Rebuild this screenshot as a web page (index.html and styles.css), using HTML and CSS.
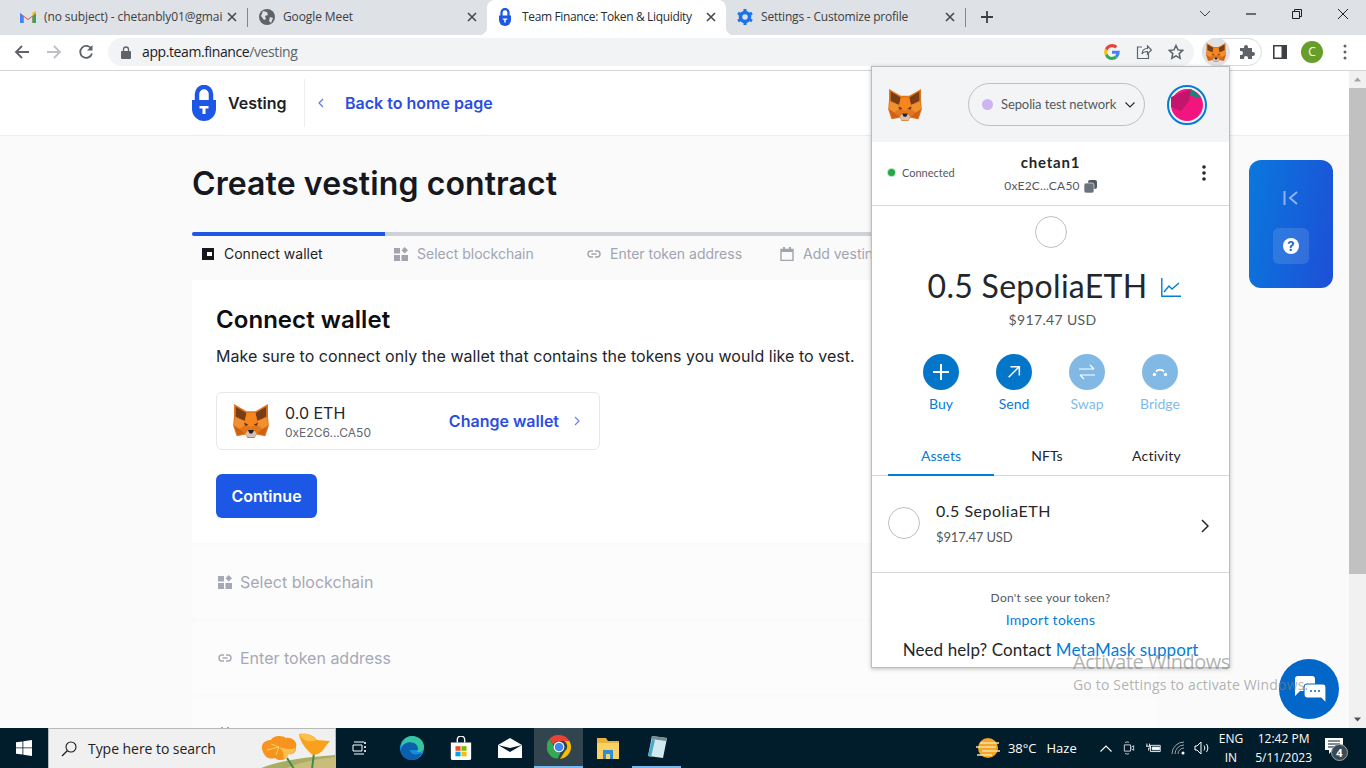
FILE: index.html
```html
<!DOCTYPE html>
<html lang="en">
<head>
<meta charset="utf-8">
<title>Team Finance: Token &amp; Liquidity</title>
<link rel="stylesheet" href="styles.css">
</head>
<body>
<svg class="defs" width="0" height="0" aria-hidden="true">
  <defs>
    <symbol id="fox" viewBox="0 0 40 38">
      <polygon fill="#E2761B" points="1,0 15,8 25,8 39,0 39,14 40,24 36,36 26,34 24,38 16,38 14,34 4,36 0,24 1,14"/>
      <polygon fill="#763D16" points="3,3 15,10 13,19 3,14"/>
      <polygon fill="#763D16" points="37,3 25,10 27,19 37,14"/>
      <polygon fill="#F6851B" points="15,10 25,10 27,19 24,24 20,26 16,24 13,19"/>
      <polygon fill="#F0902E" points="2,15 13,19 12,25 7,28 1,24"/>
      <polygon fill="#F0902E" points="38,15 27,19 28,25 33,28 39,24"/>
      <polygon fill="#CD6116" points="1,24 7,28 13,33 5,35"/>
      <polygon fill="#CD6116" points="39,24 33,28 27,33 35,35"/>
      <polygon fill="#E4751F" points="12,25 16,24 20,26 17,29 14,33 7,28"/>
      <polygon fill="#E4751F" points="28,25 24,24 20,26 23,29 26,33 33,28"/>
      <polygon fill="#D7C1B3" points="14,33 17,29 23,29 26,33 24,37 16,37"/>
      <polygon fill="#1f2329" points="16.500,29 23.500,29 21.500,33 18.500,33"/>
      <polygon fill="#5b3414" points="12,21 17,23 14,24.500"/>
      <polygon fill="#5b3414" points="28,21 23,23 26,24.500"/>
    </symbol>
    <symbol id="lock" viewBox="0 0 24 36">
      <path d="M5 16V9a7 7 0 0 1 14 0v7" fill="none" stroke="#1d57e6" stroke-width="4.500"/>
      <path d="M0 15h24v9a12 12 0 0 1-24 0z" fill="#1d57e6"/>
      <path d="M7.500 21h9v2.500h-3V29h-3v-5.500h-3z" fill="#fff"/>
    </symbol>
    <symbol id="close" viewBox="0 0 10 10">
      <path d="M1 1l8 8M9 1L1 9" fill="none" stroke="#45484c" stroke-width="1.600"/>
    </symbol>
    <symbol id="grid" viewBox="0 0 14 14">
      <path d="M0 1h6v5.500H0zM0 8h6v6H0zM7.500 8H14v6H7.500z" fill="currentColor"/>
      <path d="M10.700 0l3.300 3.300-3.300 3.300-3.200-3.300z" fill="currentColor"/>
    </symbol>
    <symbol id="link" viewBox="0 0 14 8">
      <path d="M6 1H4a3 3 0 0 0 0 6h2M8 1h2a3 3 0 0 1 0 6H8M4.500 4h5" fill="none" stroke="currentColor" stroke-width="1.400"/>
    </symbol>
    <symbol id="chev-r" viewBox="0 0 6 10">
      <path d="M1 1l4 4-4 4" fill="none" stroke="currentColor" stroke-width="1.200"/>
    </symbol>
  </defs>
</svg>

<div class="browser">
  <div class="tabstrip">
    <div class="tab tab-first">
      <svg class="favicon" viewBox="0 0 16 12"><path d="M0 2l8 6 8-6v10h-3.500V5.500L8 9 3.500 5.500V12H0z" fill="#ea4335"/><path d="M0 2v10h3.500V5z" fill="#4285f4"/><path d="M12.500 5v7H16V2z" fill="#34a853"/><path d="M12.500 1.500L16 0v2l-3.500 3z" fill="#fbbc04"/></svg>
      <span class="tab-title">(no subject) - chetanbly01@gmai</span>
      <svg class="tab-x"><use href="#close"/></svg>
    </div>
    <div class="tab tab-sep tab-meet">
      <svg class="favicon" viewBox="0 0 16 16"><circle cx="8" cy="8" r="8" fill="#5f6368"/><path d="M4 2l4 1 1 3-3 1 1 3-2 1-3-4zM11 8l3 1-2 5-2-2z" fill="#dee1e6"/></svg>
      <span class="tab-title">Google Meet</span>
      <svg class="tab-x"><use href="#close"/></svg>
    </div>
    <div class="tab tab-active">
      <svg class="favicon favicon-lock"><use href="#lock"/></svg>
      <span class="tab-title">Team Finance: Token &amp; Liquidity</span>
      <svg class="tab-x"><use href="#close"/></svg>
    </div>
    <div class="tab tab-settings">
      <svg class="favicon" viewBox="0 0 16 16"><circle cx="8" cy="8" r="4.500" fill="none" stroke="#1a73e8" stroke-width="3.500"/><path d="M8 0v3M8 13v3M1 4l2.500 1.500M12.500 10.500L15 12M1 12l2.500-1.500M12.500 5.500L15 4" stroke="#1a73e8" stroke-width="3"/></svg>
      <span class="tab-title">Settings - Customize profile</span>
      <svg class="tab-x"><use href="#close"/></svg>
    </div>
    <div class="tab-divider"></div>
    <svg class="new-tab" viewBox="0 0 12 12"><path d="M6 0v12M0 6h12" stroke="#3c4043" stroke-width="1.800"/></svg>
    <div class="window-controls">
      <svg class="win-btn" viewBox="0 0 46 16"><path d="M18 5l5 5 5-5" fill="none" stroke="#3c4043"/></svg>
      <svg class="win-btn" viewBox="0 0 46 16"><path d="M18 8h10" stroke="#1f1f1f" stroke-width="1.200"/></svg>
      <svg class="win-btn" viewBox="0 0 46 16"><path d="M18.500 5.500h7v7h-7zM20.500 5V3.500h7v7H26" fill="none" stroke="#1f1f1f"/></svg>
      <svg class="win-btn" viewBox="0 0 46 16"><path d="M18 3l10 10M28 3L18 13" stroke="#1f1f1f"/></svg>
    </div>
  </div>

  <div class="toolbar">
    <svg class="nav-icon" viewBox="0 0 16 16"><path d="M15 8H2M8 2L2 8l6 6" fill="none" stroke="#5f6368" stroke-width="1.800"/></svg>
    <svg class="nav-icon" viewBox="0 0 16 16"><path d="M1 8h13M8 2l6 6-6 6" fill="none" stroke="#bdc1c6" stroke-width="1.800"/></svg>
    <svg class="nav-icon" viewBox="0 0 16 16"><path d="M13.500 5A6 6 0 1 0 14 9.500" fill="none" stroke="#5f6368" stroke-width="1.800"/><path d="M14.500 1v5.500H9z" fill="#5f6368"/></svg>
    <div class="omnibox">
      <svg class="omni-lock" viewBox="0 0 10 13"><path d="M2.500 6V3.500a2.500 2.500 0 0 1 5 0V6" fill="none" stroke="#5f6368" stroke-width="1.300"/><rect y="5" width="10" height="8" rx="1" fill="#5f6368"/></svg>
      <span class="url"><span class="url-host">app.team.finance</span>/vesting</span>
      <span class="omni-spacer"></span>
      <svg class="omni-icon" viewBox="0 0 16 16"><path d="M15.700 8.200c0-.6 0-1-.1-1.500H8v3h4.300a3.700 3.700 0 0 1-1.600 2.400l2.500 2a7.600 7.600 0 0 0 2.500-5.900z" fill="#4285f4"/><path d="M8 16c2.200 0 4-.7 5.200-2l-2.500-1.900c-.7.500-1.600.8-2.700.8A4.700 4.700 0 0 1 3.600 9.500L1 11.500A8 8 0 0 0 8 16z" fill="#34a853"/><path d="M3.600 9.500a4.700 4.700 0 0 1 0-3L1 4.500a8 8 0 0 0 0 7z" fill="#fbbc05"/><path d="M8 3.200c1.200 0 2.300.4 3.100 1.200l2.300-2.300A8 8 0 0 0 1 4.500l2.600 2A4.700 4.700 0 0 1 8 3.200z" fill="#ea4335"/></svg>
      <svg class="omni-icon" viewBox="0 0 16 16"><path d="M6 3H1.500v11.500h11V10M6 10c0-4 3-5.500 5.500-5.500V2l4 4-4 4V7.500C9 7.500 7 8 6 10z" fill="none" stroke="#5f6368" stroke-width="1.200"/></svg>
      <svg class="omni-icon" viewBox="0 0 16 16"><path d="M8 1.500l2 4.400 4.800.5-3.600 3.200 1 4.700L8 11.900l-4.200 2.400 1-4.700L1.200 6.400 6 5.900z" fill="none" stroke="#5f6368" stroke-width="1.500"/></svg>
    </div>
    <div class="ext-pill">
      <div class="ext-fox"><svg class="ext-fox-icon"><use href="#fox"/></svg></div>
      <svg class="ext-puzzle" viewBox="0 0 16 16"><path d="M1 4h4V3a2 2 0 0 1 4 0v1h4v4h1a2 2 0 0 1 0 4h-1v3H9v-1a2 2 0 0 0-4 0v1H1v-4h1a2 2 0 0 0 0-4H1z" fill="#5f6368"/></svg>
    </div>
    <svg class="tool-panel" viewBox="0 0 14 14"><path d="M.8.800h12.400v12.400H.800z" fill="none" stroke="#3c4043" stroke-width="1.600"/><path d="M8.500 1h5v12h-5z" fill="#3c4043"/></svg>
    <div class="profile">C</div>
    <svg class="tool-kebab" viewBox="0 0 4 16"><circle cx="2" cy="2" r="1.500" fill="#5f6368"/><circle cx="2" cy="8" r="1.500" fill="#5f6368"/><circle cx="2" cy="14" r="1.500" fill="#5f6368"/></svg>
  </div>

  <div class="viewport">
    <div class="page">
      <header class="site-header">
        <svg class="logo"><use href="#lock"/></svg>
        <span class="logo-text">Vesting</span>
        <span class="header-sep"></span>
        <svg class="back-chev" viewBox="0 0 6 10"><path d="M5 1L1 5l4 4" fill="none" stroke="#5b78e8" stroke-width="1.200"/></svg>
        <span class="back-link">Back to home page</span>
      </header>
      <main class="content">
        <h1 class="page-title">Create vesting contract</h1>
        <div class="progress"><div class="progress-fill"></div></div>
        <div class="steps">
          <div class="step step-on">
            <svg class="step-icon" viewBox="0 0 14 14"><path d="M1 1h12v12H1z" fill="#16181d"/><rect x="6" y="5" width="5" height="4" fill="#fff"/></svg>
            <span>Connect wallet</span>
          </div>
          <div class="step"><svg class="step-icon"><use href="#grid"/></svg><span>Select blockchain</span></div>
          <div class="step"><svg class="step-icon step-icon-link"><use href="#link"/></svg><span>Enter token address</span></div>
          <div class="step"><svg class="step-icon" viewBox="0 0 14 14"><path d="M1 2.500h12v11H1z" fill="none" stroke="currentColor" stroke-width="1.400"/><path d="M1 2h12v3H1zM3 0h2v2H3zM9 0h2v2H9z" fill="currentColor"/></svg><span>Add vesting schedule</span></div>
        </div>
        <section class="card">
          <h2 class="card-title">Connect wallet</h2>
          <p class="card-text">Make sure to connect only the wallet that contains the tokens you would like to vest.</p>
          <div class="wallet">
            <svg class="wallet-fox"><use href="#fox"/></svg>
            <div class="wallet-info">
              <div class="wallet-bal">0.0 ETH</div>
              <div class="wallet-addr">0xE2C6...CA50</div>
            </div>
            <span class="wallet-change">Change wallet</span>
            <svg class="wallet-chev"><use href="#chev-r"/></svg>
          </div>
          <button class="continue">Continue</button>
        </section>
        <div class="panel"><svg class="panel-icon"><use href="#grid"/></svg><span>Select blockchain</span><svg class="panel-chev"><use href="#chev-r"/></svg></div>
        <div class="panel"><svg class="panel-icon panel-icon-link"><use href="#link"/></svg><span>Enter token address</span><svg class="panel-chev"><use href="#chev-r"/></svg></div>
        <div class="panel panel-last"><svg class="panel-icon" viewBox="0 0 14 14"><path d="M1 2.500h12v11H1z" fill="none" stroke="currentColor" stroke-width="1.400"/><path d="M3 0h2v2H3zM9 0h2v2H9z" fill="currentColor"/></svg><svg class="panel-chev"><use href="#chev-r"/></svg></div>
      </main>

      <aside class="side-widget">
        <svg class="side-collapse" viewBox="0 0 16 14"><path d="M1.500 0v14" stroke="#8fb4f0" stroke-width="2"/><path d="M14 1L7 7l7 6" fill="none" stroke="#8fb4f0" stroke-width="2"/></svg>
        <div class="side-help">
          <div class="side-help-dot">?</div>
        </div>
      </aside>

      <div class="chat-btn">
        <svg viewBox="0 0 32 28" class="chat-icon"><path d="M1 3a3 3 0 0 1 3-3h14a3 3 0 0 1 3 3v9a3 3 0 0 1-3 3H6l-5 5z" fill="#fff"/><path d="M10 11a3 3 0 0 1 3-3h16a3 3 0 0 1 3 3v16l-5-5H13a3 3 0 0 1-3-3z" fill="#fff" stroke="#0367c9" stroke-width="1.200"/><path d="M16 15h2M20 15h2M24 15h2" stroke="#0367c9" stroke-width="1.500"/></svg>
      </div>
    </div>
    <div class="scrollbar">
      <svg class="scroll-arrow" viewBox="0 0 17 17"><path d="M5 10.500l3.500-4 3.500 4z" fill="#a3a3a3"/></svg>
      <div class="scroll-thumb"></div>
      <span class="scroll-fill"></span>
      <svg class="scroll-arrow" viewBox="0 0 17 17"><path d="M5 6.500l3.500 4 3.500-4z" fill="#505050"/></svg>
    </div>
  </div>

  <div class="taskbar">
    <div class="start">
      <svg class="start-icon" viewBox="0 0 16 16"><path d="M0 2.300L6.500 1.400V7.500H0zM7.300 1.300L16 0v7.500H7.300zM0 8.300h6.500v6.300L0 13.700zM7.300 8.300H16V16l-8.700-1.200z" fill="#fff"/></svg>
    </div>
    <div class="search">
      <svg class="search-icon" viewBox="0 0 16 16"><circle cx="10" cy="6" r="5" fill="none" stroke="#1b1b1b" stroke-width="1.100"/><path d="M6.500 9.500L1 15" stroke="#1b1b1b" stroke-width="1.300"/></svg>
      <span class="search-text">Type here to search</span>
      <svg class="search-art" viewBox="0 0 80 40"><path d="M4 40C22 32 50 28 80 26v14z" fill="#a9ad62"/><path d="M30 40C42 34 60 30 80 28v12z" fill="#c9bd7c"/><path d="M32 29l7 11M59 24l-2 16" stroke="#3f8a50" stroke-width="2"/><path d="M7 20C6 13 12 11 16 11C18 6 28 6 31 9C37 8 43 13 41 18C42 24 36 26 33 25C32 31 24 33 20 29C14 31 9 28 7 20z" fill="#f7941d"/><path d="M24 18C28 22 30 26 28 29C33 29 34 26 33 25C37 25 40 23 41 19C36 21 30 20 24 18z" fill="#fbc04e"/><path d="M24 18l-8-3M24 18l-3 8M24 18l-12 3" stroke="#fcd36a" stroke-width="1"/><path d="M44 5C50 4 58 5 62 11L75 12 L70 18C68 23 62 26 58 26C52 22 46 14 44 6z" fill="#f9a11b"/><path d="M44 5C48 12 54 14 62 11C58 5 50 4 44 5z" fill="#fbbf4a"/></svg>
    </div>
    <div class="task-apps">
      <div class="task-app">
        <svg class="task-icon" viewBox="0 0 16 18"><path d="M3 3h10M3 15h10M2 6h9v6H2z" fill="none" stroke="#fff" stroke-width="1"/><path d="M14 3v2M14 7v2M14 11v2" stroke="#fff" stroke-width="1.600"/></svg>
      </div>
      <div class="task-app">
        <svg class="task-icon task-icon-lg" viewBox="0 0 24 24"><circle cx="12" cy="12" r="12" fill="#1490d8"/><path d="M1 15C1 7 9 4 14 6c5 2 5 6 4 8h-8c0 4 5 6 12 3-2 4-6 7-10 7C6 24 1 20 1 15z" fill="#0b5fb0"/><path d="M12 0c7 0 12 5 12 11 0 3-2 5-5 5h-2c2-3 1-7-3-9C9 5 3 7 1 12 1 5 6 0 12 0z" fill="#35c5a0"/></svg>
      </div>
      <div class="task-app">
        <svg class="task-icon task-icon-lg" viewBox="0 0 24 26"><path d="M8 7V4a4 4 0 0 1 8 0v3" fill="none" stroke="#fff" stroke-width="1.500"/><path d="M1 7h22v17a2 2 0 0 1-2 2H3a2 2 0 0 1-2-2z" fill="#fff"/><path d="M6 11h5.500v5H6z" fill="#f25022"/><path d="M12.500 11H18v5h-5.500z" fill="#7fba00"/><path d="M6 17h5.500v5H6z" fill="#00a4ef"/><path d="M12.500 17H18v5h-5.500z" fill="#ffb900"/></svg>
      </div>
      <div class="task-app">
        <svg class="task-icon task-icon-lg" viewBox="0 0 24 20"><path d="M0 7L12 0l12 7v13H0z" fill="#fff"/><path d="M0 7l12 7 12-7-12 3z" fill="#011c2a"/><path d="M0 8l9 5-9 6z" fill="#fff"/></svg>
      </div>
      <div class="task-app task-app-active">
        <svg class="task-icon task-icon-lg" viewBox="0 0 24 24"><path d="M12 0a12 12 0 0 1 10.400 6H12a6 6 0 0 0-5.700 4L2.500 4A12 12 0 0 1 12 0z" fill="#ea4335"/><path d="M22.400 6A12 12 0 0 1 13 24l5-8a6 6 0 0 0-1-10z" fill="#fbbc04"/><path d="M2.500 4l5 8.500a6 6 0 0 0 6 5.500L10.500 23.800A12 12 0 0 1 2.500 4z" fill="#34a853"/><circle cx="12" cy="12" r="5.400" fill="#fff"/><circle cx="12" cy="12" r="4.300" fill="#4285f4"/></svg>
      </div>
      <div class="task-app">
        <svg class="task-icon task-icon-lg" viewBox="0 0 24 22"><path d="M1 1h9l2 3h11v6H1z" fill="#e8b33c"/><path d="M1 6h22v16H1z" fill="#fad165"/><path d="M7 13h10v9h-3v-5h-4v5H7z" fill="#2a8fd6"/></svg>
      </div>
      <div class="task-app task-app-open">
        <svg class="task-icon task-icon-lg" viewBox="0 0 22 24"><path d="M6 1l15 2-4 20-15-2z" fill="#cfe9ef"/><path d="M6 1l15 2-1 3-15-2z" fill="#7a8a93"/><path d="M2 21L6 4l3 1-4 17z" fill="#4fa6c4"/></svg>
      </div>
    </div>
    <span class="task-spacer"></span>
    <div class="tray">
      <svg class="weather" viewBox="0 0 24 20"><circle cx="12" cy="10" r="10" fill="#f2a72c"/><path d="M4 5h19M0 9h20M6 13h18M1 17h15" stroke="#fbe0a0" stroke-width="1.300"/></svg>
      <span class="weather-text">38°C</span>
      <span class="weather-text weather-label">Haze</span>
      <svg class="tray-caret" viewBox="0 0 12 7"><path d="M.5 6.500L6 1l5.500 5.500" fill="none" stroke="#fff" stroke-width="1.100"/></svg>
      <svg class="tray-icon" viewBox="0 0 16 18"><path d="M3 2c2-1 4-1 5 0M3 16c2 1 4 1 5 0M2 5h8v8H2zM11 8l3-2v6l-3-2" fill="none" stroke="#fff"/></svg>
      <svg class="tray-icon" viewBox="0 0 18 12"><path d="M5 3h11v7H5z" fill="none" stroke="#fff"/><path d="M7 5h8v3H7zM1 1v3M4 1v3M0 4h5v2H3v3" fill="none" stroke="#fff"/><path d="M7 5h8v3H7z" fill="#fff"/></svg>
      <svg class="tray-icon" viewBox="0 0 16 14"><path d="M1 13a12 12 0 0 1 12-12M4 13a9 9 0 0 1 9-9M7 13a6 6 0 0 1 6-6" fill="none" stroke="#9aa5ab"/><circle cx="12" cy="12" r="1.500" fill="#fff"/></svg>
      <svg class="tray-icon tray-speaker" viewBox="0 0 16 14"><path d="M1 5h2l4-4v12l-4-4H1z" fill="none" stroke="#fff"/><path d="M10 4.500c1 1.500 1 3.500 0 5M12.500 3c1.800 2.500 1.800 5.500 0 8" fill="none" stroke="#fff"/></svg>
      <div class="lang"><span>ENG</span><span>IN</span></div>
      <div class="clock"><span>12:42 PM</span><span>5/11/2023</span></div>
      <div class="notif">
        <svg class="notif-icon" viewBox="0 0 18 17"><path d="M0 0h18v12H8l-4 4v-4H0z" fill="#fff"/><path d="M3 3h12M3 6h12M3 9h8" stroke="#011c2a"/></svg>
        <span class="notif-badge">4</span>
      </div>
    </div>
  </div>
</div>

<div class="mm-popup">
  <div class="mm-header">
    <svg class="mm-fox"><use href="#fox"/></svg>
    <div class="mm-network">
      <span class="mm-net-dot"></span>
      <span class="mm-net-name">Sepolia test network</span>
      <svg class="mm-net-chev" viewBox="0 0 10 6"><path d="M.5.500L5 5 9.500.500" fill="none" stroke="#24272a" stroke-width="1.100"/></svg>
    </div>
    <div class="mm-avatar">
      <svg viewBox="0 0 32 32" class="mm-avatar-svg"><circle cx="16" cy="16" r="16" fill="#f2157f"/><path d="M0 8L20 0l-2 12-8 10L0 18z" fill="#c4156d"/><path d="M20 0l10 8-4 1-7-3z" fill="#0f8a74"/></svg>
    </div>
  </div>
  <div class="mm-account">
    <div class="mm-connected"><span class="mm-conn-dot"></span>Connected</div>
    <div class="mm-acct">
      <div class="mm-acct-name">chetan1</div>
      <div class="mm-acct-addr">0xE2C...CA50
        <svg class="mm-copy" viewBox="0 0 13 13"><rect x="4" y="0" width="9" height="9" rx="2" fill="#535a61"/><rect x="0" y="3" width="10" height="10" rx="2" fill="#6a737d" stroke="#fff" stroke-width=".6"/></svg>
      </div>
    </div>
    <svg class="mm-kebab" viewBox="0 0 4 16"><circle cx="2" cy="2" r="1.800" fill="#24272a"/><circle cx="2" cy="8" r="1.800" fill="#24272a"/><circle cx="2" cy="14" r="1.800" fill="#24272a"/></svg>
  </div>
  <div class="mm-overview">
    <div class="mm-token-ring"></div>
    <div class="mm-balance">
      <span class="mm-amount">0.5 SepoliaETH</span>
      <svg class="mm-chart" viewBox="0 0 20 19"><path d="M.8 0v18.200H20" fill="none" stroke="#037dd6" stroke-width="1.400"/><path d="M3 14l5-6 3 3 7-6" fill="none" stroke="#037dd6" stroke-width="1.400"/></svg>
    </div>
    <div class="mm-fiat">$917.47 USD</div>
    <div class="mm-actions">
      <div class="mm-action">
        <div class="mm-round"><svg viewBox="0 0 16 16" class="mm-round-icon"><path d="M8 0v16M0 8h16" stroke="#fff" stroke-width="2"/></svg></div>
        <span>Buy</span>
      </div>
      <div class="mm-action">
        <div class="mm-round"><svg viewBox="0 0 18 18" class="mm-round-icon"><path d="M3 15L14 4M5 3h10v10" fill="none" stroke="#fff" stroke-width="1.700"/></svg></div>
        <span>Send</span>
      </div>
      <div class="mm-action mm-action-off">
        <div class="mm-round"><svg viewBox="0 0 16 14" class="mm-round-icon"><path d="M0 4h15M11 0l4 4M16 10H1M5 14l-4-4" fill="none" stroke="#fff" stroke-width="1.200"/></svg></div>
        <span>Swap</span>
      </div>
      <div class="mm-action mm-action-off">
        <div class="mm-round"><svg viewBox="0 0 16 10" class="mm-round-icon"><path d="M4 4.500C6 2 10 2 12 4.500" fill="none" stroke="#fff" stroke-width="2"/><circle cx="2.500" cy="7.500" r="1.700" fill="#fff"/><circle cx="13.500" cy="7.500" r="1.700" fill="#fff"/></svg></div>
        <span>Bridge</span>
      </div>
    </div>
  </div>
  <div class="mm-tabs">
    <div class="mm-tab mm-tab-on">Assets</div>
    <div class="mm-tab mm-tab-nft">NFTs</div>
    <div class="mm-tab mm-tab-act">Activity</div>
  </div>
  <div class="mm-asset">
    <div class="mm-asset-ring"></div>
    <div class="mm-asset-text">
      <div class="mm-asset-name">0.5 SepoliaETH</div>
      <div class="mm-asset-fiat">$917.47 USD</div>
    </div>
    <svg class="mm-asset-chev" viewBox="0 0 8 14"><path d="M1 1l6 6-6 6" fill="none" stroke="#24272a" stroke-width="1.500"/></svg>
  </div>
  <div class="mm-foot">
    <div class="mm-foot-q">Don't see your token?</div>
    <div class="mm-foot-link">Import tokens</div>
    <div class="mm-foot-help">Need help? Contact <span class="mm-blue">MetaMask support</span></div>
  </div>
</div>

<div class="activate">
  <div class="activate-title">Activate Windows</div>
  <div class="activate-sub">Go to Settings to activate Windows.</div>
</div>
</body>
</html>
```

FILE: styles.css
```css
* { box-sizing: border-box; }
html, body { margin: 0; padding: 0; width: 1366px; height: 768px; overflow: hidden; }
body { font-family: "Inter", "Liberation Sans", sans-serif; position: relative; background: #fff; }
.defs { position: absolute; }
.browser { display: flex; flex-direction: column; width: 1366px; height: 768px; }

/* Chrome tabs */
.tabstrip { display: flex; align-items: stretch; height: 35px; background: #dee1e6; font-family: "Open Sans", "Noto Sans", sans-serif; font-size: 12px; color: #3c4043; flex: none; }
.tab { position: relative; display: flex; align-items: center; height: 35px; padding-bottom: 2px; flex: none; white-space: nowrap; }
.tab-first { width: 247px; padding-left: 20px; }
.tab-first .tab-x { margin-left: 3px; }
.tab-meet { width: 240px; padding-left: 12px; }
.tab-active { width: 239px; padding-left: 10px; background: #fff; border-radius: 8px 8px 0 0; color: #2a2d31; }
.tab-active::before, .tab-active::after { content: ""; position: absolute; bottom: 0; width: 8px; height: 8px; }
.tab-active::before { left: -8px; background: radial-gradient(circle at 0 0, transparent 8px, #fff 8.500px); }
.tab-active::after { right: -8px; background: radial-gradient(circle at 100% 0, transparent 8px, #fff 8.500px); }
.tab-settings { width: 239px; padding-left: 11px; }
.tab-sep::before { content: ""; position: absolute; left: 0; top: 8px; width: 1px; height: 19px; background: #80868b; }
.favicon { width: 16px; height: 16px; flex: none; margin-right: 8px; }
.favicon-lock { width: 12px; height: 18px; margin: 0 11px 0 2px; }
.tab-title { flex: 1; min-width: 0; overflow: hidden; letter-spacing: -.1px; }
.tab-active .tab-title { letter-spacing: -.35px; }
.tab-settings .tab-title { letter-spacing: -.2px; }
.tab-x { width: 10px; height: 10px; flex: none; margin: 0 10px 0 8px; }
.tab-divider { width: 1px; height: 19px; margin-top: 8px; background: #80868b; flex: none; }
.new-tab { width: 12px; height: 12px; flex: none; margin: 11px 0 0 15px; }
.window-controls { display: flex; margin-left: auto; flex: none; height: 16px; margin-top: 6px; }
.win-btn { width: 46px; height: 16px; }

/* Chrome toolbar */
.toolbar { display: flex; align-items: center; height: 36px; background: #fff; border-bottom: 1px solid #d3d5d8; padding: 0 0 1px 14px; flex: none; }
.nav-icon { width: 16px; height: 16px; margin-right: 16px; flex: none; }
.omnibox { display: flex; align-items: center; width: 1086px; height: 28px; margin-left: -2px; padding: 0 10px 0 13px; background: #f1f3f4; border-radius: 14px; flex: none; }
.omni-lock { width: 10px; height: 13px; flex: none; }
.url { font-family: "Open Sans", "Noto Sans", sans-serif; font-size: 14px; color: #5f6368; margin-left: 11px; padding-bottom: 2px; letter-spacing: -.4px; }
.url-host { color: #202124; }
.omni-spacer { flex: 1; }
.omni-icon { width: 16px; height: 16px; margin-left: 16px; flex: none; }
.ext-pill { display: flex; align-items: center; width: 60px; height: 28px; margin-left: 8px; border: 1px solid #dadce0; border-radius: 14px; flex: none; }
.ext-fox { display: flex; align-items: center; justify-content: center; width: 28px; height: 28px; margin: -1px 0 -1px -1px; border-radius: 50%; background: #dfe1e5; }
.ext-fox-icon { width: 20px; height: 19px; }
.ext-puzzle { width: 16px; height: 16px; margin-left: 9px; flex: none; }
.tool-panel { width: 14px; height: 14px; margin-left: 11px; flex: none; }
.profile { width: 22px; height: 22px; margin-left: 14px; border-radius: 50%; background: #679e29; color: #fff; font: 12px/22px "Open Sans", sans-serif; text-align: center; flex: none; }
.tool-kebab { width: 4px; height: 16px; margin-left: 20px; flex: none; }

/* Page */
.viewport { display: flex; flex: 1; min-height: 0; }
.page { position: relative; flex: 1; min-width: 0; background: #fafafa; overflow: hidden; }
.scrollbar { display: flex; flex-direction: column; width: 17px; background: #f1f1f1; flex: none; }
.scroll-arrow { width: 17px; height: 17px; flex: none; }
.scroll-thumb { height: 486px; background: #c1c1c1; flex: none; }
.scroll-fill { flex: 1; }

.site-header { display: flex; align-items: center; height: 65px; padding-left: 192px; background: #fff; border-bottom: 1px solid #ececec; }
.logo { width: 24px; height: 36px; flex: none; }
.logo-text { margin-left: 12px; font-size: 16px; font-weight: 600; color: #1d1f24; width: 76px; flex: none; }
.header-sep { width: 1px; height: 48px; background: #eeeeee; flex: none; }
.back-chev { width: 6px; height: 10px; margin-left: 13px; flex: none; }
.back-link { margin-left: 21px; font-size: 16px; font-weight: 600; color: #2b4ee0; }

.content { width: 966px; margin-left: 192px; }
.page-title { margin: 0; padding-top: 30px; height: 96px; font-size: 32px; line-height: 36px; font-weight: 600; color: #16181d; letter-spacing: .1px; }
.progress { height: 4px; background: #cfd1d9; border-radius: 2px; }
.progress-fill { width: 193px; height: 4px; background: #1d57e6; border-radius: 2px 0 0 2px; }
.steps { display: flex; height: 44px; padding-top: 9px; }
.step { display: flex; align-items: flex-start; width: 193px; padding-left: 9px; font-size: 14px; line-height: 18px; color: #a1a4b1; white-space: nowrap; flex: none; }
.step-on { color: #1d1f24; }
.step-icon { width: 14px; height: 14px; margin: 2px 9px 0 0; flex: none; }
.step-icon-link { width: 14px; height: 8px; margin-top: 5px; }
.card { height: 263px; padding: 25px 24px 24px; background: #fff; }
.card-title { margin: 0; font-size: 24px; line-height: 30px; font-weight: 600; color: #0d0e11; letter-spacing: .05px; }
.card-text { margin: 9px 0 0; font-size: 16px; line-height: 24px; color: #23252b; white-space: nowrap; letter-spacing: .04px; }
.wallet { display: flex; align-items: center; width: 384px; height: 58px; margin-top: 24px; padding: 0 19px 0 16px; border: 1px solid #e6e7eb; border-radius: 6px; }
.wallet-fox { width: 36px; height: 34px; flex: none; }
.wallet-info { margin-left: 16px; padding-top: 2px; flex: 1; }
.wallet-bal { font-size: 16px; line-height: 20px; color: #23252b; }
.wallet-addr { font-size: 12px; line-height: 16px; margin-top: 2px; color: #63666f; }
.wallet-change { font-size: 16px; font-weight: 600; color: #2b4ee0; }
.wallet-chev { width: 6px; height: 10px; margin-left: 15px; color: #6784ec; flex: none; }
.continue { display: block; width: 101px; height: 44px; margin-top: 24px; padding: 0; border: 0; border-radius: 6px; background: #1d57e6; color: #fff; font: 600 16px "Inter", sans-serif; }
.panel { display: flex; align-items: center; height: 73px; margin-top: 3px; padding: 0 26px; background: #fcfcfc; border-radius: 6px; font-size: 16px; color: #a6a8b5; }
.card + .panel { margin-top: 2px; }
.panel-icon { width: 14px; height: 14px; margin-right: 8px; flex: none; }
.panel-icon-link { height: 8px; }
.panel span { flex: 1; }
.panel-last { justify-content: space-between; }
.panel-chev { width: 6px; height: 10px; flex: none; }

.side-widget { position: absolute; left: 1249px; top: 89px; display: flex; flex-direction: column; align-items: center; width: 84px; height: 128px; padding-top: 31px; border-radius: 12px; background: linear-gradient(100deg, #0a78dc, #1d4fd8); }
.side-collapse { width: 16px; height: 14px; }
.side-help { display: flex; align-items: center; justify-content: center; width: 36px; height: 36px; margin-top: 23px; border-radius: 6px; background: rgba(255,255,255,.12); }
.side-help-dot { width: 16px; height: 16px; border-radius: 50%; background: #fff; color: #1a63dc; font: 700 13px/16px "Inter", sans-serif; text-align: center; }
.chat-btn { position: absolute; left: 1279px; top: 588px; display: flex; align-items: center; justify-content: center; width: 60px; height: 60px; border-radius: 50%; background: #0367c9; }
.chat-icon { width: 32px; height: 28px; margin: 2px 0 0 2px; }

/* Taskbar */
.taskbar { display: flex; align-items: stretch; height: 40px; background: #011c2a; color: #fff; font-family: "Open Sans", "Noto Sans", sans-serif; flex: none; }
.start { display: flex; align-items: center; justify-content: center; width: 48px; flex: none; }
.start-icon { width: 16px; height: 16px; }
.search { position: relative; display: flex; align-items: center; width: 288px; padding-left: 12px; background: #f0f0f0; border: 1px solid #b9b9b9; border-bottom: 0; color: #222; overflow: hidden; flex: none; }
.search-icon { width: 16px; height: 16px; flex: none; }
.search-text { margin-left: 11px; font-size: 14px; letter-spacing: -.05px; }
.search-art { position: absolute; right: 0; top: 0; width: 80px; height: 40px; }
.task-apps { display: flex; flex: none; }
.task-app { display: flex; align-items: center; justify-content: center; width: 49px; flex: none; }
.task-app:first-child { width: 46px; margin-right: 5px; }
.task-app-active { background: #32454f; border-bottom: 2px solid #76b9ed; }
.task-app-open { border-bottom: 2px solid #76b9ed; }
.task-icon { width: 16px; height: 18px; }
.task-icon-lg { width: 24px; height: 24px; }
.task-spacer { flex: 1; }
.tray { display: flex; align-items: center; flex: none; font-size: 12px; padding-right: 23px; }
.weather { width: 24px; height: 22px; margin-right: 8px; flex: none; }
.weather-text { font-size: 13px; }
.weather-label { margin-left: 10px; }
.tray-caret { width: 12px; height: 7px; margin-left: 23px; flex: none; }
.tray-icon { width: 16px; height: 14px; margin-left: 9px; flex: none; }
.tray-speaker { margin-left: 7px; }
.lang, .clock { display: flex; flex-direction: column; align-items: center; line-height: 19px; text-align: center; }
.lang { margin-left: 9px; }
.clock { margin-left: 12px; }
.notif { position: relative; width: 18px; height: 17px; margin-left: 13px; margin-top: -4px; flex: none; }
.notif-icon { width: 18px; height: 17px; display: block; }
.notif-badge { position: absolute; left: 6px; top: 6px; width: 17px; height: 17px; border-radius: 50%; background: #3b4a52; border: 1px solid #9ba5aa; font-size: 11px; font-weight: 700; line-height: 15px; text-align: center; color: #fff; }

/* MetaMask popup */
.mm-popup { position: absolute; left: 871px; top: 66px; display: flex; flex-direction: column; width: 359px; height: 602px; border: 1px solid #bdbdbd; background: #fff; box-shadow: 0 1px 4px rgba(0,0,0,.25); font-family: "Lato", "Noto Sans", sans-serif; color: #24272a; overflow: hidden; }
.mm-header { display: flex; align-items: center; height: 75px; background: #f2f4f6; padding: 0 22px 0 16px; flex: none; }
.mm-fox { width: 34px; height: 32px; flex: none; }
.mm-network { display: flex; align-items: center; width: 177px; height: 43px; margin-left: 46px; padding: 0 9px 0 13px; border: 1px solid #bbc0c5; border-radius: 22px; flex: none; }
.mm-net-dot { width: 11px; height: 11px; border-radius: 50%; background: #cfb5f0; flex: none; }
.mm-net-name { flex: 1; margin-left: 8px; padding-bottom: 2px; font-size: 13px; letter-spacing: -.1px; color: #535a61; white-space: nowrap; }
.mm-net-chev { width: 10px; height: 6px; flex: none; }
.mm-avatar { display: flex; align-items: center; justify-content: center; width: 40px; height: 40px; margin-left: 22px; border: 2px solid #037dd6; border-radius: 50%; flex: none; }
.mm-avatar-svg { width: 32px; height: 32px; }
.mm-account { display: grid; grid-template-columns: 1fr auto 1fr; align-items: center; height: 64px; padding: 0 23px 0 16px; border-bottom: 1px solid #d6d9dc; flex: none; }
.mm-connected { display: flex; align-items: center; font-size: 11px; color: #535a61; margin-top: -2px; }
.mm-conn-dot { width: 7px; height: 7px; margin-right: 7px; border-radius: 50%; background: #28a745; box-shadow: 0 0 0 1px #b9e3c3; flex: none; }
.mm-acct { text-align: center; margin: -3px 0 0 7px; }
.mm-acct-name { font-size: 15px; font-weight: 700; line-height: 20px; letter-spacing: .8px; }
.mm-acct-addr { display: flex; align-items: center; justify-content: center; gap: 4px; margin: 6px 0 -2px 0; font-size: 12px; line-height: 16px; letter-spacing: .2px; color: #535a61; }
.mm-copy { width: 13px; height: 13px; flex: none; }
.mm-kebab { width: 4px; height: 16px; justify-self: end; margin-top: -2px; }
.mm-overview { display: flex; flex-direction: column; align-items: center; height: 228px; padding-top: 10px; flex: none; }
.mm-token-ring { width: 32px; height: 32px; margin-left: 1px; border: 1px solid #bbc0c5; border-radius: 50%; }
.mm-balance { display: flex; align-items: center; height: 40px; margin-top: 18px; padding-left: 8px; }
.mm-amount { font-size: 32px; line-height: 40px; letter-spacing: .3px; white-space: nowrap; }
.mm-chart { width: 20px; height: 19px; margin-left: 14px; margin-top: 2px; flex: none; }
.mm-fiat { margin: 4px 0 0 4px; font-size: 14px; line-height: 20px; letter-spacing: .35px; color: #535a61; }
.mm-actions { display: flex; justify-content: center; gap: 1px; margin-top: 24px; }
.mm-action { display: flex; flex-direction: column; align-items: center; width: 72px; font-size: 14px; line-height: 16px; color: #037dd6; }
.mm-action-off { color: #81bbe6; }
.mm-round { display: flex; align-items: center; justify-content: center; width: 36px; height: 36px; margin-bottom: 6px; border-radius: 50%; background: #0376c9; }
.mm-action-off .mm-round { background: #81b9e4; }
.mm-round-icon { width: 16px; height: 16px; }
.mm-tabs { display: flex; align-items: flex-start; height: 43px; padding: 0 16px; border-bottom: 1px solid #d6d9dc; flex: none; margin-top: -1px; font-size: 14px; line-height: 20px; }
.mm-tab { padding-top: 13px; text-align: center; height: 43px; flex: none; }
.mm-tab-on { width: 106px; color: #037dd6; border-bottom: 2px solid #037dd6; }
.mm-tab-nft { width: 106px; }
.mm-tab-act { width: 113px; letter-spacing: .2px; }
.mm-asset { display: flex; align-items: center; height: 97px; padding: 0 20px 2px 16px; border-bottom: 1px solid #d6d9dc; flex: none; }
.mm-asset-ring { width: 32px; height: 32px; border: 1px solid #bbc0c5; border-radius: 50%; flex: none; }
.mm-asset-text { flex: 1; margin-left: 16px; }
.mm-asset-name { font-size: 16px; line-height: 20px; letter-spacing: .5px; }
.mm-asset-fiat { margin-top: 7px; font-size: 13px; line-height: 18px; letter-spacing: -.15px; color: #535a61; }
.mm-asset-chev { width: 8px; height: 14px; margin-top: 6px; flex: none; }
.mm-foot { text-align: center; padding-top: 16px; }
.mm-foot-q { font-size: 12px; line-height: 18px; letter-spacing: .25px; color: #535a61; }
.mm-foot-link { margin-top: 3px; font-size: 14px; line-height: 20px; letter-spacing: .3px; color: #037dd6; }
.mm-foot-help { margin-top: 10px; font-size: 17px; line-height: 20px; letter-spacing: .1px; white-space: nowrap; }
.mm-blue { color: #037dd6; }

.activate { position: absolute; left: 1073px; top: 650px; font-family: "Open Sans", "Noto Sans", sans-serif; color: rgba(130,130,130,.62); white-space: nowrap; pointer-events: none; }
.activate-title { font-size: 20px; line-height: 24px; letter-spacing: -.45px; }
.activate-sub { margin-top: 1px; font-size: 14px; line-height: 20px; letter-spacing: .17px; }
```
